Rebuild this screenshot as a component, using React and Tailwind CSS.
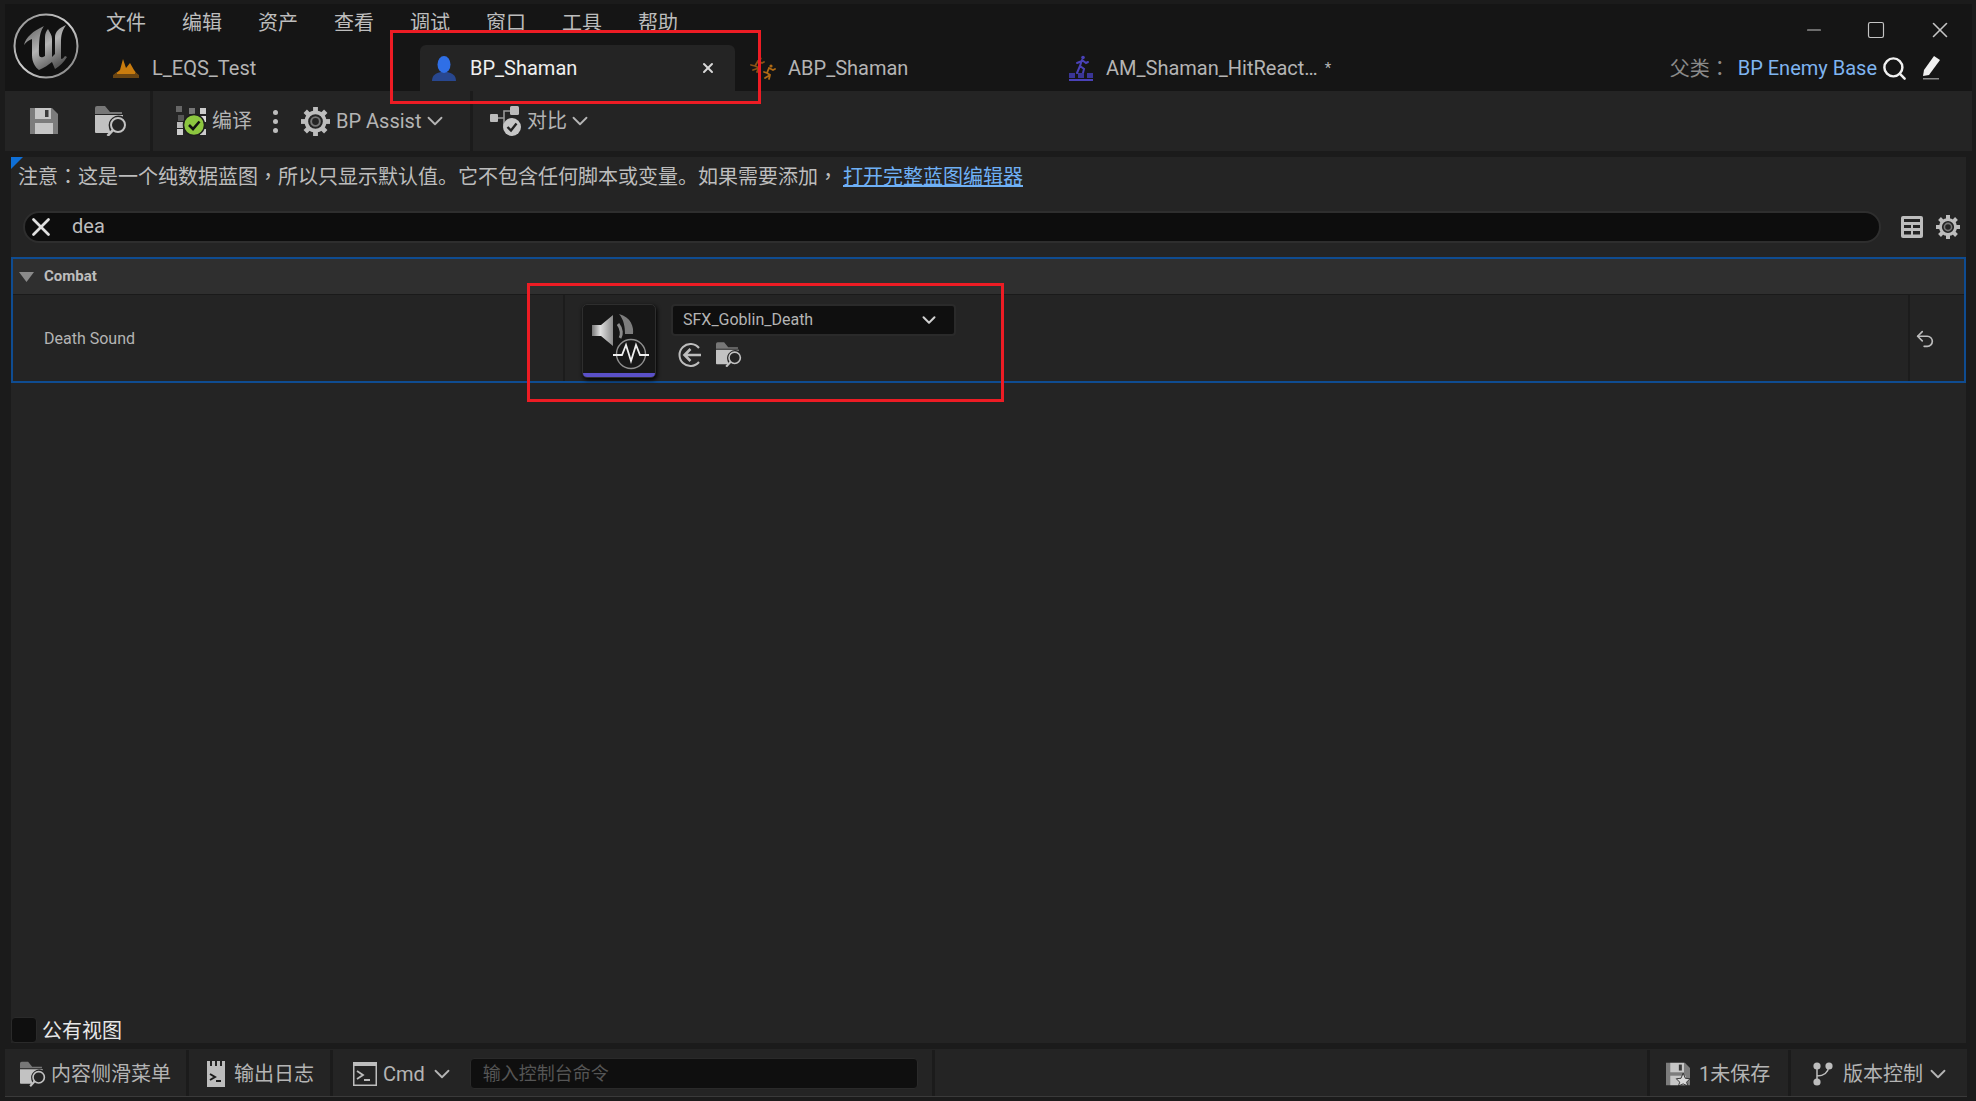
import { ChevronDown, Search, X, Minus, Square, Undo2 } from 'lucide-react';

const menus = ['文件', '编辑', '资产', '查看', '调试', '窗口', '工具', '帮助'];

// the editor draws these two marks centred in the cell, as the TC font does
const Punct = ({ children }) => <span className="font-['Noto_Sans_CJK_TC',sans-serif]">{children}</span>;

const UnrealLogo = () => (
  <svg width="68" height="68" viewBox="0 0 68 68" className="shrink-0">
    <defs>
      <linearGradient id="ring" x1="0" y1="0" x2="1" y2="1">
        <stop offset="0" stopColor="#8a8a8a" />
        <stop offset="0.5" stopColor="#d0d0d0" />
        <stop offset="1" stopColor="#777" />
      </linearGradient>
      <linearGradient id="ue" x1="0" y1="0" x2="0.6" y2="1">
        <stop offset="0" stopColor="#5c5c5c" />
        <stop offset="0.55" stopColor="#b4b4b4" />
        <stop offset="1" stopColor="#5a5a5a" />
      </linearGradient>
    </defs>
    <circle cx="34" cy="34" r="31.5" fill="#111" stroke="url(#ring)" strokeWidth="2" />
    <path
      d="M12 33 C14 25 21 19 32 14 C28 20 27 25 27 42 C27 46 30 46 33 44 L33 25 C33 22 34 19 36 17 C38 21 40 23 40 27 L40 45 L43 42 L43 25 C43 20 47 16 54 13 C50 19 49 23 49 31 L49 46 C49 48 51 47 53 44 L55 45 C52 50 48 54 43 57 L40 50 C36 53 32 56 27 58 C23 55 20 50 20 43 L20 27 C17 28 14 30 12 33 Z"
      fill="url(#ue)"
    />
  </svg>
);

const LevelIcon = () => (
  <svg width="26" height="22" viewBox="0 0 26 22" className="shrink-0">
    <path d="M2 17 L7 13 L10 2 L13 11 L17 6 L21 13 L24 17 Z" fill="#c97c0e" />
    <path d="M0 18 L4 15 L4 17 L22 17 L22 15 L26 18 L26 21 L0 21 Z" fill="#6a4512" />
  </svg>
);

const PersonIcon = () => (
  <svg width="24" height="25" viewBox="0 0 24 25" className="shrink-0">
    <path d="M0 25 C0 19 4 17 9 16 L15 16 C20 17 24 19 24 25 Z" fill="#28478f" />
    <ellipse cx="12" cy="8.5" rx="6.5" ry="8.5" fill="#2f6fe6" />
  </svg>
);

const RunnersIcon = () => (
  <svg width="26" height="24" viewBox="0 0 26 24" className="shrink-0" fill="none" stroke="#8a5216" strokeWidth="1.8" strokeLinecap="round">
    <circle cx="10" cy="2.5" r="1.6" fill="#8a5216" stroke="none" />
    <path d="M8 5 L5 10 L9 12 L7 16 M8 5 L12 7 L14 6 M5 10 L1 9 M9 12 L3 14" />
    <circle cx="21" cy="10" r="1.6" fill="#b06a14" stroke="none" />
    <path d="M19 12 L17 17 L20 19 L19 23 M19 12 L23 14 L25 13 M17 17 L14 16 M20 19 L15 22" stroke="#b06a14" />
  </svg>
);

const MontageIcon = () => (
  <svg width="26" height="26" viewBox="0 0 26 26" className="shrink-0">
    <g fill="none" stroke="#4a42b8" strokeWidth="2" strokeLinecap="round">
      <circle cx="15" cy="2.5" r="1.8" fill="#4a42b8" stroke="none" />
      <path d="M14 5 L12 11 L16 14 L15 18 M14 5 L18 8 L20 7 M14 6 L9 8 M12 11 L9 18" />
    </g>
    <rect x="1" y="18" width="6" height="5" fill="#3a3596" />
    <rect x="10" y="18" width="6" height="5" fill="#3a3596" />
    <rect x="19" y="18" width="6" height="5" fill="#3a3596" />
    <rect x="1" y="24" width="24" height="2" fill="#4a42b8" />
  </svg>
);

const SaveIcon = ({ size = 28, star = false }) => (
  <svg width={size} height={size} viewBox="0 0 28 28" className="shrink-0">
    <path d="M0 1 L22 1 L28 7 L28 27 L0 27 Z" fill="#7c7c7c" />
    <rect x="5" y="1" width="16" height="11" fill="#c6c6c6" />
    <rect x="15" y="3" width="3.5" height="7" fill="#3a3a3a" />
    <rect x="5" y="16" width="18" height="11" fill="#c6c6c6" />
    {star && <path d="M20 13 L22.5 19 L28 19.5 L24 23.5 L25.5 28 L20 25.5 L14.5 28 L16 23.5 L12 19.5 L17.5 19 Z" fill="#d8d8d8" stroke="#242424" strokeWidth="1" />}
  </svg>
);

const BrowseIcon = ({ w = 32, h = 30 }) => (
  <svg width={w} height={h} viewBox="0 0 32 30" className="shrink-0">
    <path d="M0 2 Q0 0 2 0 L10 0 L15 6 L27 6 L27 8 L0 8 Z" fill="#777" />
    <path d="M0 9 L28 9 L28 10.5 A10 10 0 0 0 14 22 L15.5 27 L1 27 Q0 27 0 26 Z" fill="#c2c2c2" />
    <circle cx="23" cy="19" r="7" fill="none" stroke="#c2c2c2" strokeWidth="2" />
    <path d="M18 24 L12.5 30" stroke="#c2c2c2" strokeWidth="2.6" />
  </svg>
);

const CompileIcon = () => (
  <svg width="31" height="30" viewBox="0 0 31 30" className="shrink-0">
    <rect x="0" y="0" width="6" height="6" fill="#666" />
    <rect x="13" y="2" width="6" height="6" fill="#777" />
    <rect x="24" y="2" width="6" height="6" fill="#ccc" />
    <rect x="2" y="9" width="6" height="6" fill="#555" />
    <rect x="1" y="16" width="6" height="6" fill="#bbb" />
    <rect x="1" y="23" width="6" height="6" fill="#ccc" />
    <rect x="24" y="23" width="6" height="6" fill="#ccc" />
    <rect x="24" y="10" width="6" height="6" fill="#ddd" />
    <circle cx="18" cy="19" r="10.5" fill="#8cc63f" stroke="#1e1e1e" strokeWidth="1.5" />
    <path d="M13 19 L17 23 L23.5 15.5" fill="none" stroke="#111" strokeWidth="2.6" />
  </svg>
);

const DiffIcon = () => (
  <svg width="32" height="30" viewBox="0 0 32 30" className="shrink-0">
    <rect x="0" y="8" width="8" height="8" rx="1" fill="#bbb" />
    <rect x="20" y="0" width="9" height="9" rx="1.5" fill="#bbb" />
    <path d="M8 12 L14 12 L14 5 L20 5 M14 12 L14 19 L18 19" fill="none" stroke="#999" strokeWidth="1.6" />
    <circle cx="22" cy="21" r="9" fill="#c6c6c6" />
    <path d="M17.5 21 L21 24.5 L26.5 17.5" fill="none" stroke="#222" strokeWidth="2.4" />
  </svg>
);

const TableIcon = () => (
  <svg width="22" height="22" viewBox="0 0 22 22" className="shrink-0">
    <rect width="22" height="22" rx="2" fill="#bdbdbd" />
    <rect x="3" y="3" width="16" height="3" fill="#242424" />
    <rect x="3" y="9" width="7" height="3" fill="#242424" />
    <rect x="12" y="9" width="7" height="3" fill="#242424" />
    <rect x="3" y="15" width="7" height="3.5" fill="#242424" />
    <rect x="12" y="15" width="7" height="3.5" fill="#242424" />
  </svg>
);

const GearIcon = ({ size = 24, color = '#bdbdbd' }) => (
  <svg width={size} height={size} viewBox="0 0 24 24" className="shrink-0">
    <g fill={color}>
      {[0, 45, 90, 135, 180, 225, 270, 315].map((a) => (
        <rect key={a} x="10" y="0" width="4" height="5" transform={`rotate(${a} 12 12)`} />
      ))}
    </g>
    <circle cx="12" cy="12" r="7.6" fill="none" stroke={color} strokeWidth="3" />
    <circle cx="12" cy="12" r="3.6" fill="none" stroke="#777" strokeWidth="1.6" />
  </svg>
);

const SoundThumb = () => (
  <div className="w-[74px] h-[74px] shrink-0 rounded-[5px] border border-[#2e2e2e] bg-[#171717] shadow-[1px_2px_4px_#000] flex flex-col overflow-hidden">
    <svg width="72" height="67" viewBox="0 0 72 67" className="shrink-0">
      <defs>
        <linearGradient id="spk" x1="0" y1="0" x2="1" y2="0">
          <stop offset="0" stopColor="#777" />
          <stop offset="0.4" stopColor="#e0e0e0" />
          <stop offset="1" stopColor="#8a8a8a" />
        </linearGradient>
      </defs>
      <path d="M9 20 L18 20 L30 10 L30 41 L18 31 L9 31 Z" fill="url(#spk)" />
      <path d="M36 9 C48 12 51 22 50 29 L42 29 C42 22 41 15 36 9 Z" fill="#7d7d7d" />
      <path d="M35 19 C39 24 39 30 37 33" fill="none" stroke="#8c8c8c" strokeWidth="3" />
      <circle cx="48" cy="49" r="14.5" fill="#181818" stroke="#8e8e8e" strokeWidth="1.4" />
      <path d="M30 50 L39 50 L43 40 L48 56 L53 40 L57 50 L66 50" fill="none" stroke="#eee" strokeWidth="1.8" />
    </svg>
    <div className="h-[4px] mt-[1px] bg-[#5a50c8]" />
  </div>
);

const UseArrowIcon = () => (
  <svg width="24" height="24" viewBox="0 0 24 24" className="shrink-0" fill="none" stroke="#bdbdbd">
    <path d="M21 5 A11 11 0 1 0 21 19" strokeWidth="2" />
    <path d="M7 12 L23 12 M12.5 6 L6.5 12 L12.5 18" strokeWidth="2.6" />
  </svg>
);

const LogIcon = () => (
  <svg width="18" height="26" viewBox="0 0 18 26" className="shrink-0">
    <path d="M0 0 L3 0 L3 5 L5 5 L5 0 L8 0 L8 5 L10 5 L10 0 L13 0 L13 5 L15 5 L15 0 L18 0 L18 26 L0 26 Z" fill="#bdbdbd" />
    <path d="M3 13 L8 16 L3 19" fill="none" stroke="#1c1c1c" strokeWidth="2" />
    <rect x="9" y="19" width="5" height="2" fill="#1c1c1c" />
  </svg>
);

const CmdIcon = () => (
  <svg width="24" height="24" viewBox="0 0 24 24" className="shrink-0">
    <rect x="0.75" y="0.75" width="22.5" height="22.5" fill="none" stroke="#bdbdbd" strokeWidth="1.5" />
    <rect x="0" y="0" width="24" height="4" fill="#bdbdbd" />
    <path d="M4 9 L10 13 L4 17" fill="none" stroke="#bdbdbd" strokeWidth="1.8" />
    <rect x="11" y="17" width="6" height="2" fill="#bdbdbd" />
  </svg>
);

const BranchIcon = () => (
  <svg width="20" height="24" viewBox="0 0 20 24" className="shrink-0" fill="#bdbdbd">
    <circle cx="4" cy="4" r="3.6" />
    <circle cx="16" cy="4" r="3.6" />
    <circle cx="4" cy="20" r="3.6" />
    <path d="M4 4 L4 20 M4 14 C10 14 15 11 16 4" fill="none" stroke="#bdbdbd" strokeWidth="1.5" />
  </svg>
);

export default function App() {
  return (
    <div className="relative w-[1976px] h-[1101px] overflow-hidden bg-[#1b1b1b] pt-[4px] pl-[5px] pr-[4px] flex flex-col font-[Roboto,'Noto_Sans_CJK_SC',sans-serif] text-[#bdbdbd]">
      {/* title bar */}
      <div className="h-[87px] shrink-0 bg-[#151515] flex">
        <div className="w-[92px] shrink-0 pl-[7px] pt-[8px]">
          <UnrealLogo />
        </div>
        <div className="flex-1 flex flex-col">
          <div className="h-[41px] shrink-0 flex items-center pl-[9px] pb-[4px] gap-[41px] text-[20px] text-[#bdbdbd]">
            <div className="flex gap-[36px]">
              {menus.map((m) => (
                <span key={m}>{m}</span>
              ))}
            </div>
            <div className="ml-auto flex items-center gap-[41px] pr-[19px] pt-[15px] text-[#c4c4c4]">
              <Minus size={22} strokeWidth={1.3} />
              <Square size={20} strokeWidth={1.4} />
              <X size={26} strokeWidth={1.5} />
            </div>
          </div>
          <div className="flex-1 flex items-stretch">
            <div className="w-[323px] h-full flex items-center pl-[16px] gap-[13px] text-[20px] text-[#b4b4b4]">
              <LevelIcon />
              <span>L_EQS_Test</span>
            </div>
            <div className="w-[315px] h-full rounded-t-[6px] bg-[#242424] flex items-center pl-[12px] gap-[14px] text-[20px] text-[#f0f0f0]">
              <PersonIcon />
              <span className="flex-1">BP_Shaman</span>
              <X size={16} strokeWidth={3} className="mr-[19px] text-[#d8d8d8]" />
            </div>
            <div className="w-[316px] h-full flex items-center pl-[15px] gap-[12px] text-[20px] text-[#b4b4b4]">
              <RunnersIcon />
              <span>ABP_Shaman</span>
            </div>
            <div className="h-full flex items-center pl-[17px] gap-[12px] text-[20px] text-[#b4b4b4]">
              <MontageIcon />
              <span>AM_Shaman_HitReact…</span>
              <span className="-ml-[5px] text-[15px]">*</span>
            </div>
            <div className="ml-auto flex items-center pr-[30px] text-[20px]">
              <span className="text-[#8a8a8a] mr-[8px]">父类<Punct>：</Punct></span>
              <span className="text-[#7fb4f0]">BP Enemy Base</span>
              <Search size={27} strokeWidth={2.2} className="ml-[4px] text-[#f0f0f0]" />
              <svg width="22" height="24" viewBox="0 0 22 24" className="ml-[12px] shrink-0">
                <path d="M14 0 L20 4 L9 19 L3 20 L4 14 Z" fill="#f0f0f0" />
                <rect x="3" y="22" width="16" height="1.5" fill="#888" />
              </svg>
            </div>
          </div>
        </div>
      </div>

      {/* toolbar */}
      <div className="h-[60px] shrink-0 bg-[#242424] flex items-center text-[20px] text-[#b4b4b4]">
        <div className="h-full w-[148px] flex items-center pl-[25px] gap-[37px] border-r-[3px] border-[#1b1b1b]">
          <SaveIcon />
          <BrowseIcon />
        </div>
        <div className="h-full w-[320px] flex items-center pl-[23px] border-r-[3px] border-[#1b1b1b]">
          <CompileIcon />
          <span className="ml-[5px]">编译</span>
          <div className="ml-[21px] flex flex-col gap-[4px]">
            <span className="w-[5px] h-[5px] rounded-full bg-[#bdbdbd]" />
            <span className="w-[5px] h-[5px] rounded-full bg-[#bdbdbd]" />
            <span className="w-[5px] h-[5px] rounded-full bg-[#bdbdbd]" />
          </div>
          <span className="ml-[23px]"><GearIcon size={29} /></span>
          <span className="ml-[6px]">BP Assist</span>
          <ChevronDown size={26} strokeWidth={1.7} className="ml-[1px]" />
        </div>
        <div className="h-full flex items-center pl-[17px]">
          <DiffIcon />
          <span className="ml-[5px]">对比</span>
          <ChevronDown size={26} strokeWidth={1.7} />
        </div>
      </div>

      <div className="h-[6px] shrink-0" />

      {/* details panel */}
      <div className="relative ml-[6px] mr-[6px] h-[886px] shrink-0 bg-[#242424] flex flex-col">
        <div className="absolute left-0 top-0 w-0 h-0 border-t-[12px] border-r-[12px] border-t-[#0f6fd6] border-r-transparent" />
        <div className="h-[38px] shrink-0 flex items-center pl-[7px] pt-[1px] text-[20px] text-[#bdbdbd]">
          <span>注意<Punct>：</Punct>这是一个纯数据蓝图<Punct>，</Punct>所以只显示默认值。它不包含任何脚本或变量。如果需要添加<Punct>，</Punct></span>
          <span className="ml-[5px] text-[#6fb0f5] underline">打开完整蓝图编辑器</span>
        </div>
        <div className="mt-[16px] flex items-center pl-[12px]">
          <div className="w-[1858px] h-[32px] rounded-full bg-[#0d0d0d] border-2 border-[#2e2e2e] flex items-center pl-[2px] text-[20px] text-[#bdbdbd]">
            <X size={30} strokeWidth={2.2} className="text-[#e0e0e0] -ml-[1px]" />
            <span className="ml-[16px] -mt-[2px]">dea</span>
          </div>
          <div className="ml-[20px]"><TableIcon /></div>
          <div className="ml-[13px]"><GearIcon /></div>
        </div>
        <div className="mt-[14px] border-2 border-[#0f4c91] h-[126px] flex flex-col">
          <div className="h-[36px] shrink-0 bg-[#2f2f2f] border-b border-[#1a1a1a] flex items-center pl-[6px] text-[15px] font-bold text-[#bdbdbd]">
            <svg width="15" height="10" viewBox="0 0 15 10" className="shrink-0">
              <path d="M0 0 L15 0 L7.5 10 Z" fill="#8a8a8a" />
            </svg>
            <span className="ml-[10px]">Combat</span>
          </div>
          <div className="flex-1 flex items-stretch">
            <div className="w-[552px] shrink-0 flex items-center pl-[31px] pt-[2px] text-[16px] text-[#b4b4b4] border-r-2 border-[#1c1c1c]">
              Death Sound
            </div>
            <div className="flex-1 flex pl-[17px] pt-[9px]">
              <SoundThumb />
              <div className="ml-[15px]">
                <div className="w-[285px] h-[32px] rounded-[4px] bg-[#0f0f0f] border-2 border-[#2a2a2a] flex items-center justify-between pl-[10px] pr-[14px] text-[16px] text-[#b4b4b4]">
                  <span>SFX_Goblin_Death</span>
                  <ChevronDown size={22} strokeWidth={2.2} className="text-[#d0d0d0]" />
                </div>
                <div className="mt-[6px] pl-[7px] flex items-center gap-[14px]">
                  <UseArrowIcon />
                  <BrowseIcon w={26} h={25} />
                </div>
              </div>
            </div>
            <div className="w-[56px] shrink-0 border-l-2 border-[#1c1c1c] flex items-center justify-center">
              <Undo2 size={22} strokeWidth={1.8} className="text-[#bdbdbd] mr-[24px] mt-[2px]" />
            </div>
          </div>
        </div>
        <div className="mt-auto h-[27px] flex items-center">
          <div className="w-[26px] h-[26px] rounded-[4px] bg-[#0f0f0f] border border-[#2a2a2a]" />
          <span className="ml-[5px] pt-[2px] text-[20px] text-[#e8e8e8]">公有视图</span>
        </div>
      </div>

      <div className="h-[6px] shrink-0" />

      {/* status bar */}
      <div className="h-[48px] shrink-0 mr-[5px] pt-[1px] bg-[#242424] border-b border-[#3a3a3a] flex items-stretch text-[20px] text-[#b4b4b4]">
        <div className="w-[184px] flex items-center pl-[15px] pt-[1px] border-r-[3px] border-[#1b1b1b]">
          <BrowseIcon w={26} h={26} />
          <span className="ml-[5px]">内容侧滑菜单</span>
        </div>
        <div className="w-[144px] flex items-center pl-[18px] pt-[1px] border-r-[3px] border-[#1b1b1b]">
          <LogIcon />
          <span className="ml-[9px]">输出日志</span>
        </div>
        <div className="w-[602px] flex items-center pl-[20px] pt-[1px] border-r-[3px] border-[#1b1b1b]">
          <CmdIcon />
          <span className="ml-[6px]">Cmd</span>
          <ChevronDown size={26} strokeWidth={1.7} className="ml-[4px]" />
          <div className="ml-[15px] w-[448px] h-[31px] rounded-[4px] bg-[#0f0f0f] border border-[#2a2a2a] flex items-center pl-[12px] text-[18px] text-[#555]">
            输入控制台命令
          </div>
        </div>
        <div className="flex-1" />
        <div className="w-[141px] flex items-center pl-[16px] pt-[1px] border-l-[3px] border-[#1b1b1b]">
          <SaveIcon size={24} star />
          <span className="ml-[9px]">1未保存</span>
        </div>
        <div className="w-[179px] flex items-center pl-[22px] pt-[1px] border-l-[3px] border-[#1b1b1b]">
          <BranchIcon />
          <span className="ml-[10px]">版本控制</span>
          <ChevronDown size={26} strokeWidth={1.7} className="ml-[2px]" />
        </div>
      </div>

      {/* red annotation boxes */}
      <div className="absolute left-[390px] top-[30px] w-[371px] h-[74px] border-[3px] border-[#ed1c24]" />
      <div className="absolute left-[527px] top-[283px] w-[477px] h-[119px] border-[3px] border-[#ed1c24]" />
    </div>
  );
}
